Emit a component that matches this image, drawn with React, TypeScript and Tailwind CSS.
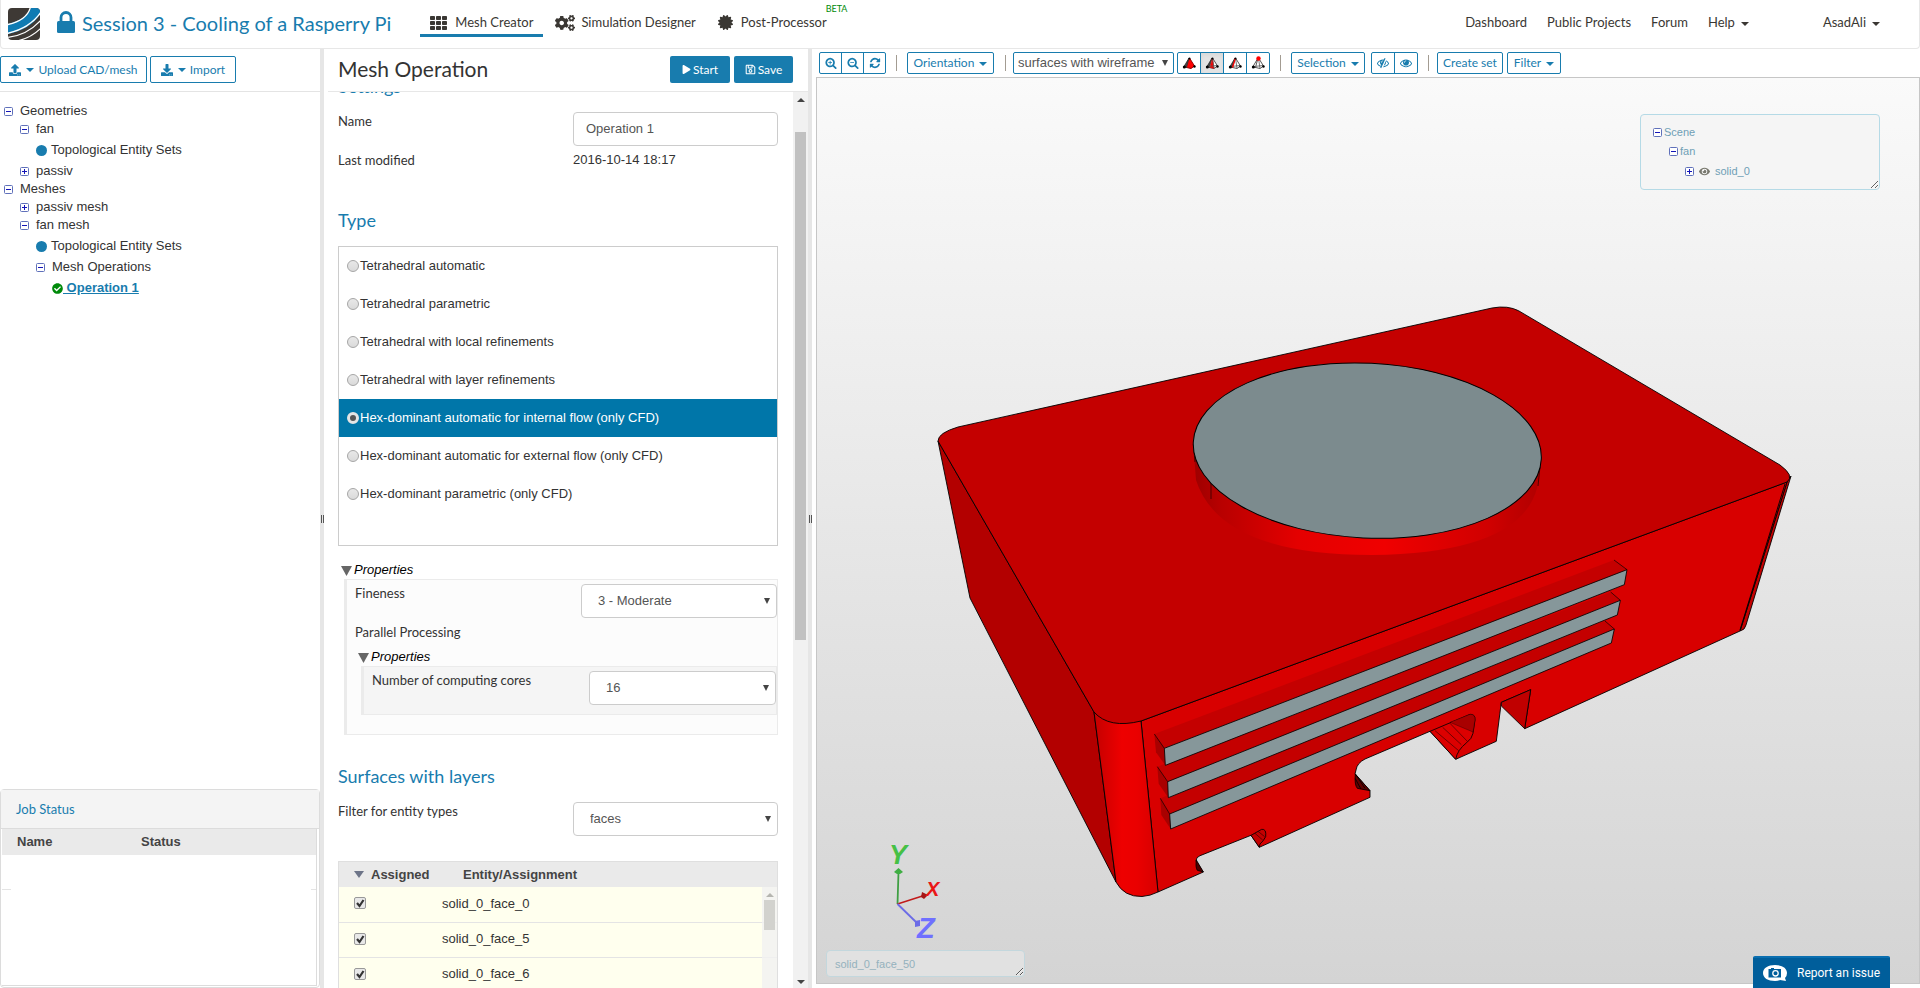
import { ReactNode } from 'react'
import { FaCertificate, FaCheckCircle, FaCogs, FaDownload, FaEye, FaPlay, FaRegSave, FaUpload } from 'react-icons/fa'

const EYE =
  'M1664 960q-152-236-381-353 61 104 61 225 0 185-131.500 316.500t-316.500 131.500-316.500-131.500-131.500-316.500q0-121 61-225-229 117-381 353 133 205 333.500 326.500t434.500 121.500 434.500-121.500 333.500-326.500zm-720-384q0-20-14-34t-34-14q-125 0-214.500 89.500t-89.500 214.500q0 20 14 34t34 14 34-14 14-34q0-86 61-147t147-61q20 0 34-14t14-34zm848 384q0 34-20 69-140 230-376.500 368.500t-499.500 138.500-499.500-139-376.500-368q-20-35-20-69t20-69q140-229 376.500-368t499.500-139 499.500 139 376.500 368q20 35 20 69z'
const LENS =
  'M1216 832q0-185-131.500-316.500t-316.500-131.500-316.500 131.500-131.500 316.500 131.500 316.500 316.500 131.500 316.500-131.500 131.500-316.500zm512 832q0 53-37.500 90.500t-90.500 37.500q-54 0-90-38l-343-342q-179 124-399 124-143 0-273.500-55.500t-225-150-150-225-55.500-273.500 55.500-273.500 150-225 225-150 273.500-55.500 273.500 55.500 225 150 150 225 55.500 273.500q0 220-124 399l343 343q37 37 37 90z'
const ZOOM_IN = LENS + 'M480 768h224v-224h128v224h224v128h-224v224h-128v-224h-224z'
const ZOOM_OUT = LENS + 'M480 768h576v128h-576z'
const REFRESH =
  'M1639 1056q0 5-1 7-64 268-268 434.500t-478 166.500q-146 0-282.500-55t-243.500-157l-129 129q-19 19-45 19t-45-19-19-45v-448q0-26 19-45t45-19h448q26 0 45 19t19 45-19 45l-137 137q71 66 161 102t187 36q134 0 250-65t186-179q11-17 53-117 8-23 30-23h192q13 0 22.500 9.500t9.500 22.500zm25-800v448q0 26-19 45t-45 19h-448q-26 0-45-19t-19-45 19-45l138-138q-148-137-349-137-134 0-250 65t-186 179q-11 17-53 117-8 23-30 23h-199q-13 0-22.500-9.500t-9.500-22.500v-7q65-268 270-434.500t480-166.500q146 0 284 55.500t245 156.500l130-129q19-19 45-19t45 19 19 45z'

function Glyph({ d }: { d: string }) {
  return (
    <svg viewBox="0 0 1792 1792" fill="currentColor" fillRule="evenodd" className="size-3">
      <path d={d} />
    </svg>
  )
}

function Caret() {
  return (
    <svg viewBox="0 0 8 4" fill="currentColor" className="mt-px h-1 w-2 shrink-0">
      <path d="M0 0h8L4 4z" />
    </svg>
  )
}

function Toggle({ open }: { open?: boolean }) {
  return (
    <svg viewBox="0 0 9 9" className="size-[9px] shrink-0" fill="none">
      <rect x="0.5" y="0.5" width="8" height="8" rx="1" fill="#fff" stroke="#5f70ba" />
      <path d={open ? 'M2 4.500h5' : 'M2 4.500h5M4.500 2v5'} stroke="#1414b8" />
    </svg>
  )
}

function Logo() {
  return (
    <svg viewBox="0 0 32 32" className="size-8">
      <defs>
        <clipPath id="logo">
          <rect width="32" height="32" rx="4" />
        </clipPath>
      </defs>
      <g clipPath="url(#logo)">
        <rect width="32" height="32" fill="#3e3935" />
        <path d="M0 16C11 13 20 9 23 -1h9v7C26 17 14 23 0 26z" fill="#0f7bb3" />
        <path d="M0 16.500C11 14 20 9 22.500 -1" fill="none" stroke="#fff" strokeWidth="1.300" />
        <path d="M-1 25.500C14 22 25 16 33 4" fill="none" stroke="#fff" strokeWidth="1.500" />
        <path d="M-1 29.500C13 28 24 22 33 12" fill="none" stroke="#fff" strokeWidth="1.300" />
        <path d="M9 33C18 31 27 26 33 20" fill="none" stroke="#fff" strokeWidth="1.200" />
      </g>
    </svg>
  )
}

function Lock() {
  return (
    <svg viewBox="0 0 18 22" className="mb-[2px] h-[22px] w-[18px] text-[#187cae]">
      <path d="M4 11V6.500a5 5 0 0 1 10 0V11" fill="none" stroke="currentColor" strokeWidth="2.800" />
      <rect y="10" width="18" height="12" rx="1.500" fill="currentColor" />
    </svg>
  )
}

function Header() {
  return (
    <header className="flex h-[49px] shrink-0 items-center rounded-b border border-t-0 border-[#e7e7e7] pl-[7px] text-[13px] text-[#3a3733]">
      <Logo />
      <div className="ml-[17px] flex items-center gap-[7px] pb-[3px]">
        <Lock />
        <h1 className="text-xl text-[#187cae]">Session 3 - Cooling of a Rasperry Pi</h1>
      </div>
      <nav className="ml-[29px] mt-[11px] flex self-start">
        <a href="#mesh" className="flex h-[26px] items-center gap-2 border-b-3 border-[#187cae] px-[10px]">
          <svg viewBox="0 0 17 14" fill="currentColor" className="h-[14px] w-[17px]">
            {[0, 5, 10].map((y) =>
              [0, 6, 12].map((x) => <rect key={x + '-' + y} x={x} y={y} width="5" height="4" rx="0.800" />),
            )}
          </svg>
          Mesh Creator
        </a>
        <a href="#simulation" className="ml-3 flex h-[26px] items-center gap-[6px] border-b-3 border-transparent">
          <FaCogs className="size-5" />
          Simulation Designer
        </a>
        <a href="#post" className="ml-[22px] flex h-[26px] items-center gap-2 border-b-3 border-transparent">
          <FaCertificate className="size-[15px]" />
          Post-Processor
          <span className="-ml-[9px] -mt-7 text-[9px] leading-3 text-[#008a0a]">BETA</span>
        </a>
      </nav>
      <nav className="ml-auto mr-[39px] flex items-center gap-5 pb-[2px]">
        <a href="#dashboard">Dashboard</a>
        <a href="#projects">Public Projects</a>
        <a href="#forum">Forum</a>
        <button className="flex items-center gap-[6px]">
          Help <Caret />
        </button>
        <button className="ml-[54px] flex items-center gap-[6px]">
          AsadAli <Caret />
        </button>
      </nav>
    </header>
  )
}

function Splitter() {
  return (
    <div className="flex w-1 shrink-0 items-center justify-center bg-[#e6e6e6]">
      <div className="h-2 w-[3px] border-x border-[#555]" />
    </div>
  )
}

const TREE = [
  { label: 'Geometries', pad: 'pl-1', kind: 'open' },
  { label: 'fan', pad: 'pl-5', kind: 'open' },
  { label: 'Topological Entity Sets', pad: 'pl-9', kind: 'dot' },
  { label: 'passiv', pad: 'pl-5', kind: 'closed' },
  { label: 'Meshes', pad: 'pl-1', kind: 'open' },
  { label: 'passiv mesh', pad: 'pl-5', kind: 'closed' },
  { label: 'fan mesh', pad: 'pl-5', kind: 'open' },
  { label: 'Topological Entity Sets', pad: 'pl-9', kind: 'dot' },
  { label: 'Mesh Operations', pad: 'pl-9', kind: 'open' },
]

function Sidebar() {
  return (
    <aside className="flex w-80 shrink-0 flex-col">
      <div className="flex h-[43px] shrink-0 items-center gap-[3px] border-b border-[#e4e4e4] pb-1 pt-[3px] text-xs text-[#187cae]">
        <button className="flex h-[27px] w-[147px] items-center justify-center rounded-xs border border-[#187cae]">
          <FaUpload className="mr-[5px] size-3" />
          <Caret />
          <span className="ml-1">Upload CAD/mesh</span>
        </button>
        <button className="flex h-[27px] w-[86px] items-center justify-center rounded-xs border border-[#187cae]">
          <FaDownload className="mr-[5px] size-3" />
          <Caret />
          <span className="ml-1">Import</span>
        </button>
      </div>
      <ul className="flex-1 pt-[10px] font-['Liberation_Sans',sans-serif] text-[13px] text-[#333]">
        {TREE.map((node, i) => (
          <li key={i} className={`flex items-center ${node.pad} ${node.kind === 'dot' ? 'h-6 gap-1' : 'h-[18px] gap-[7px]'}`}>
            {node.kind === 'dot' ? <span className="size-[11px] rounded-full bg-[#187cae]" /> : <Toggle open={node.kind === 'open'} />}
            {node.label}
          </li>
        ))}
        <li className="flex h-6 items-center pl-[52px]">
          <FaCheckCircle className="size-[11px] text-[#008a0a]" />
          <a href="#operation" className="whitespace-pre font-bold text-[#187cae] underline">
            {' Operation 1'}
          </a>
        </li>
      </ul>
      <section className="flex h-[199px] shrink-0 flex-col rounded border border-[#dcdcdc]">
        <h2 className="h-[39px] border-b border-[#dcdcdc] bg-[#f4f4f4] pl-[15px] text-[13px] leading-[38px] text-[#187cae]">
          Job Status
        </h2>
        <div className="mb-px ml-px mr-[2px] flex-1 border-b border-r border-[#dcdcdc]">
          <table className="w-full text-left font-['Liberation_Sans',sans-serif] text-[13px] text-[#444]">
            <thead>
              <tr className="h-[26px] bg-[#eaeaea]">
                <th className="w-[124px] pl-[15px]">Name</th>
                <th className="pl-[15px]">Status</th>
              </tr>
            </thead>
          </table>
          <div className="flex h-[35px] items-end justify-between">
            <span className="w-[9px] border-b border-[#e4e4e4]" />
            <span className="w-[5px] border-b border-[#e4e4e4]" />
          </div>
        </div>
      </section>
    </aside>
  )
}

const MESH_TYPES = [
  'Tetrahedral automatic',
  'Tetrahedral parametric',
  'Tetrahedral with local refinements',
  'Tetrahedral with layer refinements',
  'Hex-dominant automatic for internal flow (only CFD)',
  'Hex-dominant automatic for external flow (only CFD)',
  'Hex-dominant parametric (only CFD)',
]

const FACES = ['solid_0_face_0', 'solid_0_face_5', 'solid_0_face_6']

function SelectBox({ id, value, className }: { id: string; value: string; className: string }) {
  return (
    <div className={`relative h-[34px] ${className}`}>
      <select
        id={id}
        className="h-full w-full appearance-none rounded border border-[#ccc] bg-white pl-4 font-['Liberation_Sans',sans-serif] text-[13px] text-[#555]"
      >
        <option>{value}</option>
      </select>
      <svg viewBox="0 0 6 6" className="pointer-events-none absolute right-[7px] top-[14px] size-[6px]" fill="#444">
        <path d="M0 0h6L3 6z" />
      </svg>
    </div>
  )
}

function Disclosure() {
  return (
    <svg viewBox="0 0 11 10" className="mt-[2px] h-[10px] w-[11px]" fill="#666">
      <path d="M0 0h11L5.500 10z" />
    </svg>
  )
}

function MeshOperation() {
  return (
    <main className="flex w-[484px] shrink-0 flex-col text-[13px] text-[#333]">
      <div className="ml-1 flex h-[43px] shrink-0 items-center border-b border-[#e7e7e7] pb-1 pl-[10px] pr-[15px] pt-[3px]">
        <h2 className="flex-1 pb-[2px] text-[21px] leading-[22px]">Mesh Operation</h2>
        <div className="flex gap-1 text-xs text-white">
          <button className="flex h-[27px] w-[60px] items-center justify-center gap-[2px] rounded-xs bg-[#187cae]">
            <FaPlay className="size-[9px]" />
            Start
          </button>
          <button className="flex h-[27px] w-[59px] items-center justify-center gap-[2px] rounded-xs bg-[#187cae]">
            <FaRegSave className="size-[11px]" />
            Save
          </button>
        </div>
      </div>
      <div className="flex min-h-0 flex-1">
        <div className="flex flex-1 flex-col overflow-hidden pl-[14px] pr-[15px]">
          <h3 className="-mt-4 h-9 shrink-0 text-lg leading-5 text-[#187cae]">Settings</h3>
          <div className="flex h-[34px] shrink-0">
            <label htmlFor="name" className="flex-1 leading-[18px]">
              Name
            </label>
            <input
              id="name"
              defaultValue="Operation 1"
              className="w-[205px] rounded border border-[#ccc] px-3 font-['Liberation_Sans',sans-serif] text-[13px] text-[#555]"
            />
          </div>
          <div className="mt-1 flex h-[60px] shrink-0">
            <span className="flex-1 leading-5">Last modified</span>
            <span className="w-[205px] font-['Liberation_Sans',sans-serif] text-[13px] leading-5">2016-10-14 18:17</span>
          </div>
          <h3 className="h-9 shrink-0 text-lg leading-5 text-[#187cae]">Type</h3>
          <fieldset className="h-[300px] shrink-0 border border-[#ccc] font-['Liberation_Sans',sans-serif] text-[13px]">
            {MESH_TYPES.map((type, i) => (
              <label
                key={type}
                className={`flex h-[38px] items-center gap-px pl-2 ${i === 4 ? 'bg-[#0076a9] text-white' : ''}`}
              >
                <input
                  type="radio"
                  name="type"
                  defaultChecked={i === 4}
                  className="size-3 appearance-none rounded-full border border-[#a6a6a6] bg-linear-to-b from-[#e8e8e8] to-[#dadada] checked:border-[3px] checked:border-[#e4e4e4] checked:bg-[#555] checked:bg-none"
                />
                {type}
              </label>
            ))}
          </fieldset>
          <div className="mt-[14px] flex h-[19px] shrink-0 items-center gap-[2px] pl-[3px] pt-px font-['Liberation_Sans',sans-serif] text-[13px] italic text-black">
            <Disclosure />
            Properties
          </div>
          <div className="ml-[6px] shrink-0 border border-l-3 border-[#ebebeb] bg-[#fcfcfc] pb-[19px]">
            <div className="flex pl-2 pt-1">
              <label htmlFor="fineness" className="flex-1 leading-[18px]">
                Fineness
              </label>
              <SelectBox id="fineness" value="3 - Moderate" className="w-[196px]" />
            </div>
            <div className="mt-1 pl-2 leading-5">Parallel Processing</div>
            <div className="mt-1 flex h-5 items-center gap-[2px] pl-[11px] pt-px font-['Liberation_Sans',sans-serif] text-[13px] italic text-black">
              <Disclosure />
              Properties
            </div>
            <div className="ml-[14px] flex h-[49px] border border-l-3 border-[#ebebeb] bg-[#f5f5f5] pl-2 pt-1">
              <label htmlFor="cores" className="flex-1 leading-[18px]">
                Number of computing cores
              </label>
              <SelectBox id="cores" value="16" className="w-[187px]" />
            </div>
          </div>
          <h3 className="mt-[29px] h-[38px] shrink-0 text-lg leading-6 text-[#187cae]">Surfaces with layers</h3>
          <div className="flex shrink-0">
            <label htmlFor="filter" className="flex-1 leading-[18px]">
              Filter for entity types
            </label>
            <SelectBox id="filter" value="faces" className="w-[205px]" />
          </div>
          <div className="relative mt-[25px] flex shrink-0 border border-b-0 border-[#dfdfdf]">
            <table className="w-full text-left font-['Liberation_Sans',sans-serif] text-[13px]">
              <thead>
                <tr className="h-[25px] bg-[#eaeaea] text-[#444]">
                  <th className="w-[103px] pl-[15px]">
                    <span className="flex items-center gap-[7px]">
                      <svg viewBox="0 0 10 7" className="h-[7px] w-[10px]" fill="#6d7488">
                        <path d="M0 0h10L5 7z" />
                      </svg>
                      Assigned
                    </span>
                  </th>
                  <th className="pl-[21px]">Entity/Assignment</th>
                </tr>
              </thead>
              <tbody>
                {FACES.map((face) => (
                  <tr key={face} className="h-[35px] border-b border-[#e4e4e4] bg-[#ffffee]">
                    <td className="pb-[2px] pl-[15px]">
                      <div className="relative size-3">
                        <input
                          type="checkbox"
                          id={face}
                          defaultChecked
                          className="block size-3 appearance-none rounded-xs border border-[#999] bg-[#e8e8e8]"
                        />
                        <svg viewBox="0 0 12 12" className="pointer-events-none absolute inset-0 size-3" fill="none">
                          <path d="M3 6l2.500 3L9.500 3" stroke="#333" strokeWidth="2.200" />
                        </svg>
                      </div>
                    </td>
                    <td className="pb-[2px]">
                      <label htmlFor={face}>{face}</label>
                    </td>
                  </tr>
                ))}
              </tbody>
            </table>
            <div className="absolute bottom-0 right-0 top-[25px] flex w-[15px] flex-col items-center bg-[#f1f1f1]/80 pt-[6px]">
              <svg viewBox="0 0 8 4" className="h-1 w-2" fill="#b5b5b0">
                <path d="M0 4h8L4 0z" />
              </svg>
              <div className="mt-[3px] h-[30px] w-[11px] bg-[#d2d2ce]" />
            </div>
          </div>
        </div>
        <div className="flex w-[15px] shrink-0 flex-col items-center bg-[#f1f1f1] pb-1 pt-[6px] text-[#444]">
          <svg viewBox="0 0 8 4" className="h-1 w-2" fill="currentColor">
            <path d="M0 4h8L4 0z" />
          </svg>
          <div className="mt-[30px] flex w-[11px] flex-1 flex-col">
            <div className="h-3/5 bg-[#c1c1c1]" />
          </div>
          <Caret />
        </div>
      </div>
    </main>
  )
}

const TOOL = 'flex h-[22px] items-center justify-center'
const OUTLINED = 'rounded-xs border border-[#187cae]'

function Tetra({ kind }: { kind: 'volume' | 'face' | 'edge' | 'node' }) {
  const full = kind === 'volume'
  return (
    <svg viewBox="0 0 14 14" className="size-[14px]" strokeLinejoin="round">
      <path d="M7.500 2L2.500 11L9 12.500L12.500 10z" fill={full ? '#f00' : '#fff'} stroke={full ? '#900' : '#555'} />
      <path d="M7 2L2 10.500L4.500 11.500z" fill={kind === 'node' ? '#fff' : '#444'} stroke="#333" strokeWidth="0.800" />
      {kind === 'face' && <path d="M7.500 2L5 11.500L9 12.500z" fill="#f00" stroke="#c00" strokeWidth="0.500" />}
      {kind !== 'volume' && <path d="M7.500 2L9 12.500M3 10.500L12 9.500" stroke="#555" strokeWidth="0.800" />}
      {kind === 'edge' && <path d="M7.500 2L4.500 11.500" stroke="#f00" strokeWidth="1.300" />}
      <circle cx="7.500" cy="2.500" r={kind === 'node' ? 2.2 : 1} fill={kind === 'node' ? '#f00' : '#000'} />
      <circle cx="2.300" cy="11" r="1.500" />
      <circle cx="12.500" cy="10.500" r="1.200" />
    </svg>
  )
}

function ToolButton({ children, width }: { children: ReactNode; width: string }) {
  return <button className={`${TOOL} ${OUTLINED} ${width} gap-[5px]`}>{children}</button>
}

function Divider({ className = 'mx-[10px]' }: { className?: string }) {
  return <span className={`h-4 w-px bg-[#a39c92] ${className}`} />
}

function Toolbar() {
  return (
    <div className="flex h-7 shrink-0 items-center pl-[3px] text-xs text-[#187cae]">
      <div className={`${TOOL} ${OUTLINED} divide-x divide-[#187cae]`}>
        <button aria-label="Zoom in" className={`${TOOL} w-[22px]`}>
          <Glyph d={ZOOM_IN} />
        </button>
        <button aria-label="Zoom out" className={`${TOOL} w-[22px]`}>
          <Glyph d={ZOOM_OUT} />
        </button>
        <button aria-label="Reset" className={`${TOOL} w-[21px]`}>
          <Glyph d={REFRESH} />
        </button>
      </div>
      <Divider />
      <ToolButton width="w-[87px]">
        Orientation <Caret />
      </ToolButton>
      <Divider className="ml-[11px] mr-[7px]" />
      <div className="relative">
        <select
          aria-label="Render mode"
          className={`${OUTLINED} block h-[22px] w-[161px] appearance-none pl-1 font-['Liberation_Sans',sans-serif] text-[13px] text-[#555]`}
        >
          <option>surfaces with wireframe</option>
        </select>
        <svg viewBox="0 0 6 6" className="pointer-events-none absolute right-[6px] top-[8px] size-[6px]" fill="#444">
          <path d="M0 0h6L3 6z" />
        </svg>
      </div>
      <div className={`${TOOL} ${OUTLINED} ml-[3px] divide-x divide-[#187cae]`}>
        <button aria-label="Pick volumes" className={`${TOOL} w-[23px]`}>
          <Tetra kind="volume" />
        </button>
        <button aria-label="Pick faces" className="flex h-5 w-[23px] items-center justify-center bg-[#e3e3e3] shadow-inner">
          <Tetra kind="face" />
        </button>
        <button aria-label="Pick edges" className={`${TOOL} w-[23px]`}>
          <Tetra kind="edge" />
        </button>
        <button aria-label="Pick nodes" className={`${TOOL} w-[22px]`}>
          <Tetra kind="node" />
        </button>
      </div>
      <Divider />
      <ToolButton width="w-[74px]">
        Selection <Caret />
      </ToolButton>
      <div className={`${TOOL} ${OUTLINED} ml-[6px] divide-x divide-[#187cae]`}>
        <button aria-label="Hide" className={`${TOOL} w-[23px]`}>
          <svg viewBox="0 0 1792 1792" fill="currentColor" fillRule="evenodd" className="size-3">
            <path d={EYE} />
            <path d="M1330 200L680 1650" stroke="#fff" strokeWidth="300" />
            <path d="M1200 200L550 1650" stroke="currentColor" strokeWidth="170" />
          </svg>
        </button>
        <button aria-label="Show" className={`${TOOL} w-[22px]`}>
          <Glyph d={EYE} />
        </button>
      </div>
      <Divider className="ml-[10px] mr-[8px]" />
      <ToolButton width="w-[66px]">Create set</ToolButton>
      <div className="ml-1">
        <ToolButton width="w-[54px]">
          Filter <Caret />
        </ToolButton>
      </div>
    </div>
  )
}

// Points of the slots are in pixels of the canvas, three to one
function Slots() {
  const slots = [
    {
      top: '121,775 1455,243 1483,267 149,822',
      side: '121,775 149,822 152,867 124,825',
      face: '149,822 1483,267 1474,309 152,867',
      edge: 'M121 775L149 822M1455 243L1483 267',
    },
    {
      top: '112,680 1472,156 1501,181 143,725',
      side: '112,680 143,725 145,773 116,731',
      face: '143,725 1501,181 1492,225 145,773',
      edge: 'M112 680L143 725M1472 156L1501 181',
    },
    {
      top: '103,582 1482,60 1521,89 133,625',
      side: '103,582 133,625 136,676 108,637',
      face: '133,625 1521,89 1513,134 136,676',
      edge: 'M103 582L133 625M1482 60L1521 89',
    },
  ]
  return (
    <>
      {slots.map((s) => (
        <g key={s.top}>
          <polygon points={s.top} fill="#c40000" />
          <polygon points={s.side} fill="#a80000" />
          <polygon points={s.face} fill="#86979a" stroke="#000" strokeWidth="2.500" strokeLinejoin="round" />
          <path d={s.edge} stroke="#000" strokeWidth="2" />
        </g>
      ))}
    </>
  )
}

function Model() {
  return (
    <svg viewBox="817 78 1102 905" className="h-full w-full">
      <defs>
        <linearGradient id="corner" x1="1095" y1="0" x2="1155" y2="0" gradientUnits="userSpaceOnUse">
          <stop offset="0" stopColor="#c60000" />
          <stop offset="0.450" stopColor="#ee0000" />
          <stop offset="0.700" stopColor="#ea0000" />
          <stop offset="1" stopColor="#d90000" />
        </linearGradient>
        <linearGradient id="fan" x1="1193" y1="0" x2="1541" y2="0" gradientUnits="userSpaceOnUse">
          <stop offset="0" stopColor="#9c0000" />
          <stop offset="0.080" stopColor="#b80000" />
          <stop offset="0.300" stopColor="#e40000" />
          <stop offset="0.550" stopColor="#f00000" />
          <stop offset="0.850" stopColor="#d00000" />
          <stop offset="1" stopColor="#b00000" />
        </linearGradient>
      </defs>
      <g stroke="#000" strokeWidth="0.900" strokeLinejoin="round">
        <path d="M938 441L970 598L1116 882L1094 712z" fill="#b30000" />
        <path d="M1787 482L1791 476L1746 625Q1745 630 1740 631z" fill="#c40000" />
        <path
          d="M1141 721L1787 482L1740 631L1524.700 728.700L1530.700 689.700L1501.300 702.300L1496.300 741.300L1455.700 759.300L1430 731.300L1365 759Q1357 763 1356 770L1355 774L1370 790.700V797.300L1259.300 847.300L1251 835.300L1200 855.700Q1196 857 1196 861L1203.300 872L1158 892z"
          fill="#d80000"
        />
        <path d="M1094 712L1116 882Q1124 897 1142 896.500Q1150 896 1158 892L1141 721z" fill="url(#corner)" />
        <path
          d="M938 441Q938 433 958 427L1492 308Q1508 305 1519 311L1780 465Q1795 476 1787 482L1141 721Q1109 729 1094 712z"
          fill="#c40000"
        />
        <path d="M1785 484L1740 630" />
      </g>
      <path d="M1193.300 444L1196 480Q1220 555 1372 555Q1520 553 1537 488L1541.300 457z" fill="url(#fan)" />
      <path d="M1193.300 444L1195 462M1211 480V499M1541 457L1538 486" stroke="#300" strokeWidth="0.800" />
      <ellipse
        cx="1367.300"
        cy="450.600"
        rx="174.200"
        ry="87.400"
        transform="rotate(2.800 1367.300 450.600)"
        fill="#7c8b8e"
        stroke="#000"
      />
      <g transform="translate(1120 540) scale(0.33333)" strokeLinejoin="round">
        <Slots />
        <g stroke="#000" strokeWidth="2.500">
          <path d="M1144 487L1232 449L1214 566L1144 498z" fill="#c00000" />
          <path d="M930 574L1050 523Q1066 522 1065 540L1059 580Q1056 596 1040 608Q1012 630 1007 658z" fill="#dc0000" />
          <path d="M990 547L1050 523Q1066 522 1065 540L1059 576z" fill="#a80000" strokeWidth="1" />
          <path d="M945 572L1016 632M968 562L1024 614M990 550L1042 604" fill="none" strokeWidth="1.500" />
          <path d="M706 702L750 752L712 745Q703 735 706 702z" fill="#600000" />
          <path d="M706 702L735 745M706 716L722 746" fill="none" />
          <path d="M393 886L425 868Q440 866 437 890Q430 904 420 912L418 922z" fill="#c40000" />
          <path d="M405 880L428 900M414 874L434 890" fill="none" strokeWidth="1.500" />
          <path d="M229 960L250 996L232 991Q226 982 229 960z" fill="#500000" />
        </g>
      </g>
      <g fill="none" strokeWidth="1.800">
        <path d="M897.500 904L898.500 872" stroke="#3f9f43" />
        <path d="M897.500 904L924 895.500" stroke="#c11a1a" strokeWidth="1.400" />
        <path d="M897.500 904L917 923" stroke="#6b6be6" />
      </g>
      <path d="M898.500 868L903 872L900 874H897L894 872z" fill="#3fae43" />
      <path d="M922 892L928 895L924 899L921 897z" fill="#a51616" />
      <path d="M915 921L920 920V926L915 927z" fill="#6b6be6" />
      <g fontFamily="Liberation Sans, sans-serif" fontStyle="italic" fontWeight="bold">
        <text x="889" y="864" fontSize="27" fill="#45c045">
          Y
        </text>
        <text x="926" y="896" fontSize="20" fill="#ea1616">
          X
        </text>
        <text x="917" y="938" fontSize="29" fill="#7070ff">
          Z
        </text>
      </g>
    </svg>
  )
}

function Viewer() {
  return (
    <section className="flex min-w-0 flex-1 flex-col pb-1 pl-1">
      <Toolbar />
      <div className="relative min-h-0 flex-1 border border-[#c6c6c6] bg-linear-to-b from-[#fafafa] to-[#d4d4d4] font-['Liberation_Sans',sans-serif] text-[11px]">
        <Model />
        <ul className="absolute right-[39px] top-9 h-[76px] w-[240px] resize overflow-hidden rounded border border-[#b5dae6] bg-[#f5f5f5] pl-3 pt-[7px] text-[#6f9fb6]">
          <li className="flex h-5 items-center gap-[2px]">
            <Toggle open /> Scene
          </li>
          <li className="flex h-[19px] items-center gap-[2px] pl-4">
            <Toggle open /> fan
          </li>
          <li className="flex h-5 items-center gap-[5px] pl-8">
            <Toggle />
            <FaEye className="size-[11px] text-[#77776d]" />
            solid_0
          </li>
        </ul>
        <div className="absolute bottom-[6px] left-[9px] h-[27px] w-[199px] resize overflow-hidden rounded border border-[#c3d7dd] bg-[#e1e1e1] pl-2 leading-[26px] text-[#94b1bd]">
          solid_0_face_50
        </div>
      </div>
    </section>
  )
}

export default function App() {
  return (
    <div className="relative flex h-screen flex-col overflow-hidden bg-white font-[Lato,sans-serif]">
      <Header />
      <div className="flex min-h-0 flex-1">
        <Sidebar />
        <Splitter />
        <MeshOperation />
        <Splitter />
        <Viewer />
      </div>
      <button className="absolute bottom-0 right-[30px] flex h-8 w-[137px] items-center gap-[10px] rounded-t-xs border-t-2 border-[#0a6fb0] bg-[#005e9b] pl-[10px] font-[Roboto,sans-serif] text-xs text-white">
        <svg viewBox="0 0 24 16" className="h-4 w-6">
          <path d="M12 0C19 0 24 3 24 8Q24 11 22 13L23 16L17 15Q15 16 12 16C5 16 0 13 0 8S5 0 12 0z" fill="#fff" />
          <path d="M5.500 4H8V3h3v1h7v8.500H5.500z" fill="#005e9b" />
          <circle cx="12.500" cy="8.300" r="2.700" fill="none" stroke="#fff" strokeWidth="1.300" />
        </svg>
        Report an issue
      </button>
    </div>
  )
}
